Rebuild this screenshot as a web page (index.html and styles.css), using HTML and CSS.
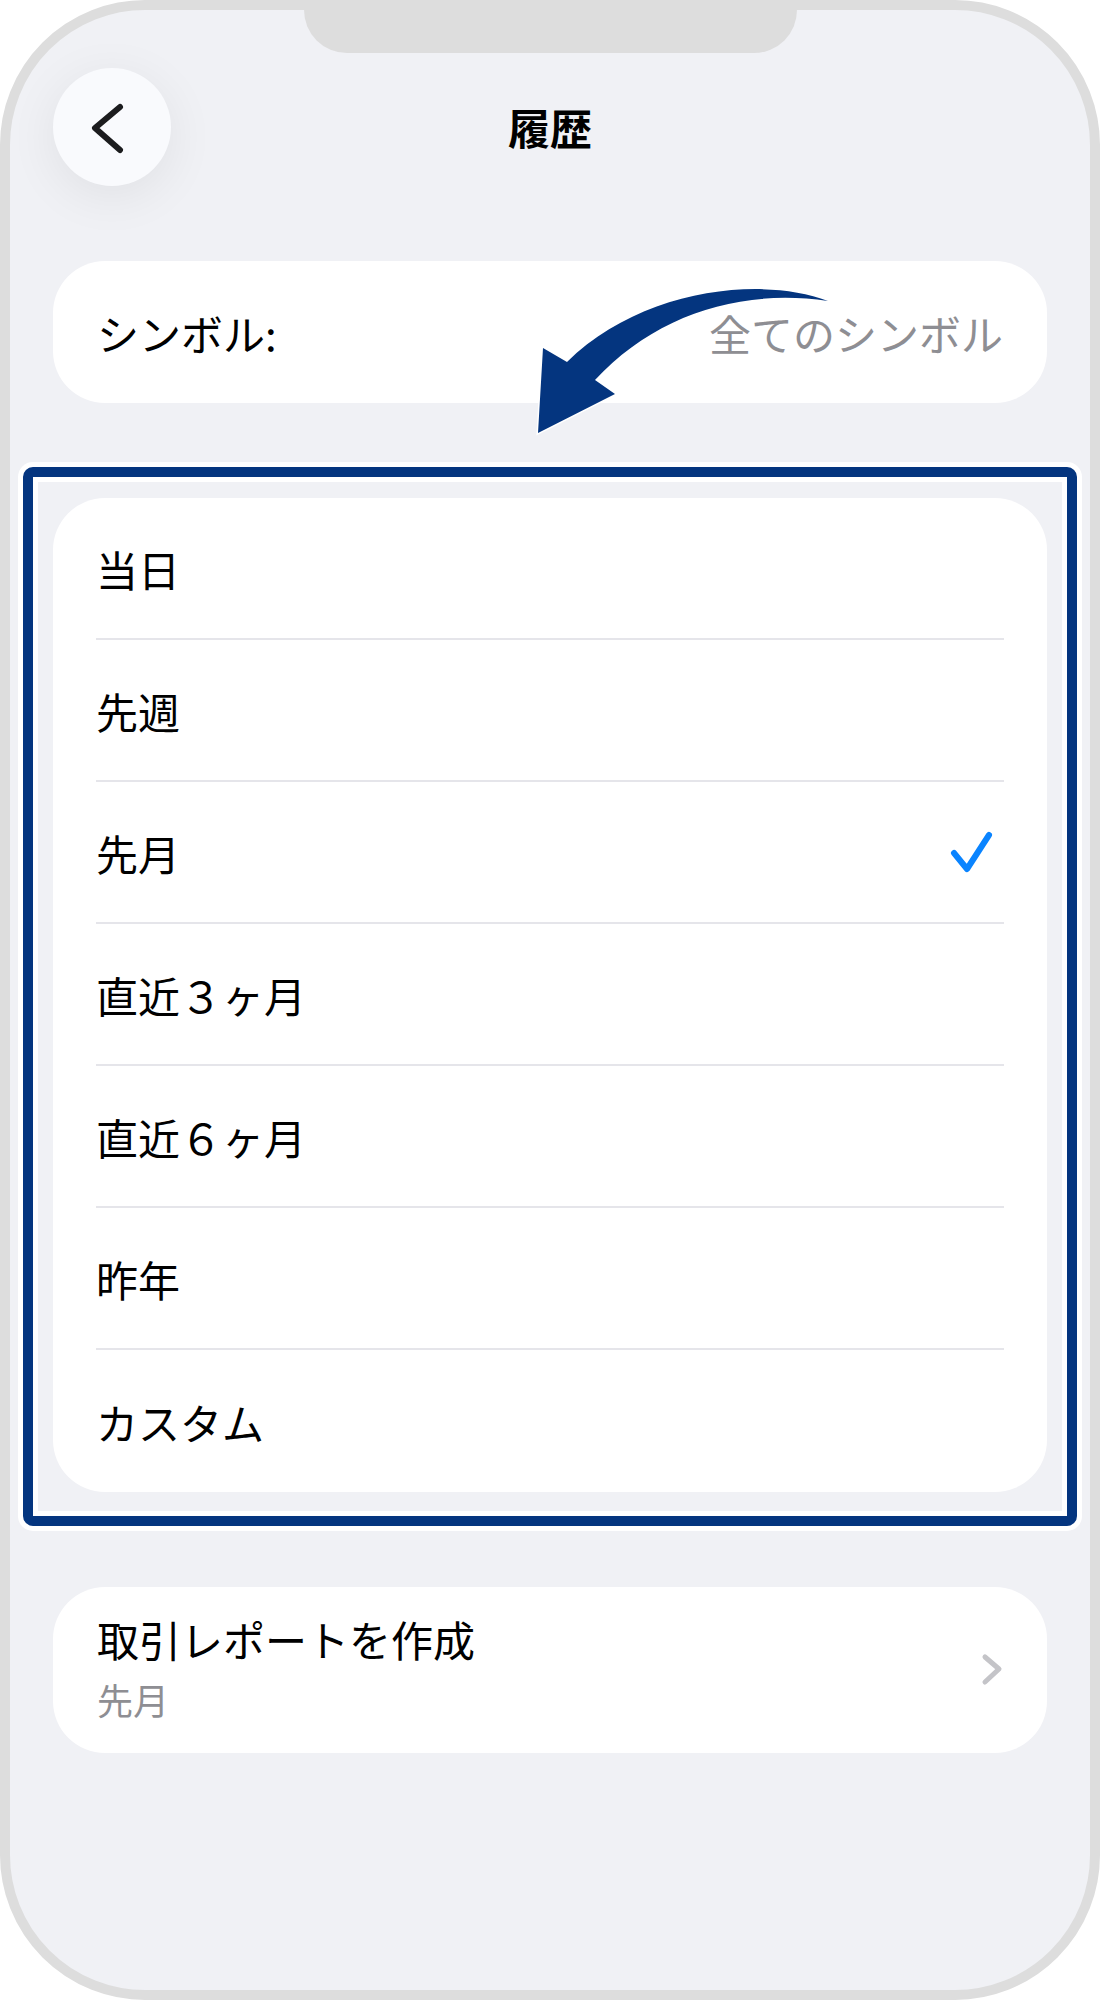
FILE: index.html
```html
<!DOCTYPE html>
<html lang="ja">
<head>
<meta charset="utf-8">
<title>履歴</title>
<link rel="stylesheet" href="styles.css">
</head>
<body>
<div class="phone">
  <div class="notch"></div>
  <header class="nav">
    <div class="nav-side">
      <div class="back">
        <svg class="back-icon" width="118" height="118" viewBox="0 0 118 118"><polyline points="67,39 42,60 67,82" fill="none" stroke="#1c1c1e" stroke-width="6" stroke-linecap="round" stroke-linejoin="round"/></svg>
      </div>
    </div>
    <h1 class="title">履歴</h1>
    <div class="nav-side"></div>
  </header>

  <section class="card symbol-card">
    <span class="label">シンボル:</span>
    <span class="value">全てのシンボル</span>
  </section>

  <div class="highlight">
    <ul class="card list">
      <li class="row">当日</li>
      <li class="row">先週</li>
      <li class="row">先月
        <svg class="check" width="58" height="44" viewBox="0 0 58 44"><polyline points="8,23 21,39 43,5" fill="none" stroke="#0a84ff" stroke-width="6" stroke-linecap="round" stroke-linejoin="round"/></svg>
      </li>
      <li class="row">直近３ヶ月</li>
      <li class="row">直近６ヶ月</li>
      <li class="row">昨年</li>
      <li class="row">カスタム</li>
    </ul>
  </div>

  <section class="card report-card">
    <div class="report-text">
      <div class="report-title">取引レポートを作成</div>
      <div class="report-sub">先月</div>
    </div>
    <svg class="chevron" width="24" height="36" viewBox="0 0 24 36"><polyline points="6,5 20,17 6,30" fill="none" stroke="#c4c4c8" stroke-width="5" stroke-linecap="round" stroke-linejoin="round"/></svg>
  </section>

  <svg class="arrow" width="320" height="175" viewBox="520 275 320 175">
    <path d="M828,301 C760,275 640,290 567,362 L543,348 L538,433 L615,394 L595,380 C655,315 740,288 828,301 Z" fill="#04357f" stroke="#ffffff" stroke-width="3" stroke-linejoin="miter" paint-order="stroke"/>
  </svg>
</div>
</body>
</html>
```

FILE: styles.css
```css
* {
  box-sizing: border-box;
}

html, body {
  margin: 0;
  padding: 0;
  background: #ffffff;
}

body {
  font-family: "Noto Sans CJK JP", "Noto Sans", sans-serif;
  color: #000000;
}

.phone {
  position: relative;
  width: 1100px;
  height: 2000px;
  border: 10px solid #dddddd;
  border-radius: 145px;
  background: #f0f1f5;
  overflow: hidden;
}

.notch {
  width: 493px;
  height: 43px;
  margin: 0 auto;
  background: #dddddd;
  border-radius: 0 0 45px 45px;
}

.nav {
  display: grid;
  grid-template-columns: 1fr auto 1fr;
  align-items: center;
  margin-top: 15px;
  padding: 0 43px;
  height: 118px;
}

.back {
  width: 118px;
  height: 118px;
  border-radius: 50%;
  background: #f9fafd;
  box-shadow: 0 10px 50px rgba(0, 0, 0, 0.07);
}

.back-icon {
  display: block;
}

.title {
  margin: 0;
  font-size: 42px;
  font-weight: 700;
  line-height: 1;
}

.card {
  background: #ffffff;
  border-radius: 52px;
}

.symbol-card {
  display: flex;
  justify-content: space-between;
  align-items: center;
  height: 142px;
  margin: 75px 43px 0;
  padding: 0 44px;
  font-size: 42px;
}

.symbol-card .value {
  color: #8e8e93;
}

.highlight {
  margin: 64px 13px 0;
  padding: 21px 20px 24px;
  border: 10px solid #04357f;
  border-radius: 10px;
  box-shadow: 0 0 0 5px #ffffff, inset 0 0 0 5px #ffffff;
}

.list {
  list-style: none;
  margin: 0;
  padding: 0;
}

.row {
  display: flex;
  justify-content: space-between;
  align-items: center;
  height: 142px;
  margin: 0 43px;
  font-size: 42px;
  border-bottom: 2px solid #e5e5ea;
}

.row:last-child {
  border-bottom: none;
}

.check {
  display: block;
}

.report-card {
  display: flex;
  justify-content: space-between;
  align-items: center;
  height: 166px;
  margin: 61px 43px 0;
  padding: 0 44px;
}

.report-text {
  display: flex;
  flex-direction: column;
  gap: 14px;
  margin-top: -6px;
}

.report-title {
  font-size: 42px;
  line-height: 50px;
}

.report-sub {
  font-size: 36px;
  line-height: 43px;
  color: #8e8e93;
}

.chevron {
  display: block;
  overflow: visible;
}

.arrow {
  position: absolute;
  left: 510px;
  top: 265px;
  overflow: visible;
  pointer-events: none;
}
```
